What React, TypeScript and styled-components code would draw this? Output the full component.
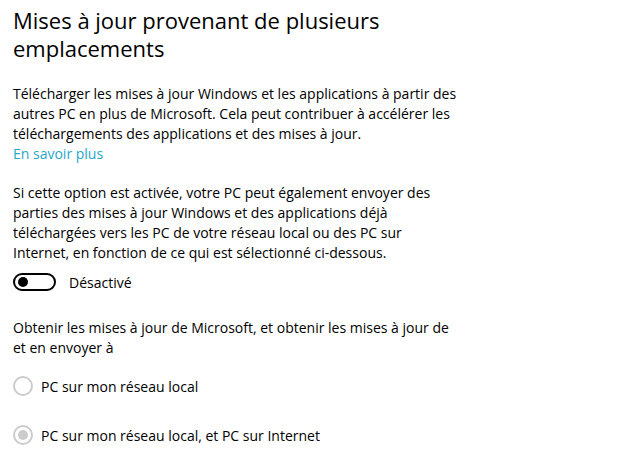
import React from "react";
import styled, { createGlobalStyle } from "styled-components";

const Global = createGlobalStyle`
  html, body { margin: 0; padding: 0; background: #ffffff; }
  body { font-family: "Open Sans", "Noto Sans", "Liberation Sans", sans-serif; color: #000; }
`;

const Page = styled.main`
  display: flex;
  flex-direction: column;
  align-items: flex-start;
  padding: 6px 0 0 13px;
  width: 627px;
  height: 457px;
  box-sizing: border-box;
  overflow: hidden;
`;

const Title = styled.h1`
  margin: 0;
  font-size: 22px;
  font-weight: 400;
  line-height: 28px;
  color: #000;
`;

const Paragraph = styled.p<{ $top: number }>`
  margin: ${(p) => p.$top}px 0 0;
  font-size: 14px;
  line-height: 20px;
  color: #000;
`;

const Link = styled.a`
  color: #27a8c8;
  text-decoration: none;
`;

const ToggleRow = styled.label`
  display: flex;
  align-items: center;
  gap: 13px;
  margin-top: 9px;
  height: 20px;
  font-size: 14px;
`;

const Track = styled.span`
  display: flex;
  align-items: center;
  box-sizing: border-box;
  width: 43px;
  height: 18px;
  border: 2px solid #000;
  border-radius: 9px;
  padding-left: 3px;
`;

const Knob = styled.span`
  width: 10px;
  height: 10px;
  border-radius: 50%;
  background: #000;
`;

const RadioRow = styled.label<{ $top: number }>`
  display: flex;
  align-items: center;
  gap: 8px;
  margin-top: ${(p) => p.$top}px;
  height: 20px;
  font-size: 14px;
  color: #000;
`;

const RadioCircle = styled.span<{ $checked?: boolean }>`
  display: flex;
  align-items: center;
  justify-content: center;
  box-sizing: border-box;
  width: 20px;
  height: 20px;
  border: 2px solid #cccccc;
  border-radius: 50%;
  &::after {
    content: "";
    display: ${(p) => (p.$checked ? "block" : "none")};
    width: 10px;
    height: 10px;
    border-radius: 50%;
    background: #cccccc;
  }
`;

export default function App() {
  return (
    <>
      <Global />
      <Page>
        <Title>
          Mises à jour provenant de plusieurs
          <br />
          emplacements
        </Title>
        <Paragraph $top={22}>
          Télécharger les mises à jour Windows et les applications à partir des
          <br />
          autres PC en plus de Microsoft. Cela peut contribuer à accélérer les
          <br />
          téléchargements des applications et des mises à jour.
          <br />
          <Link href="#">En savoir plus</Link>
        </Paragraph>
        <Paragraph $top={19}>
          Si cette option est activée, votre PC peut également envoyer des
          <br />
          parties des mises à jour Windows et des applications déjà
          <br />
          téléchargées vers les PC de votre réseau local ou des PC sur
          <br />
          Internet, en fonction de ce qui est sélectionné ci-dessous.
        </Paragraph>
        <ToggleRow>
          <Track>
            <Knob />
          </Track>
          Désactivé
        </ToggleRow>
        <Paragraph $top={26}>
          Obtenir les mises à jour de Microsoft, et obtenir les mises à jour de
          <br />
          et en envoyer à
        </Paragraph>
        <RadioRow $top={18}>
          <RadioCircle />
          PC sur mon réseau local
        </RadioRow>
        <RadioRow $top={29}>
          <RadioCircle $checked />
          PC sur mon réseau local, et PC sur Internet
        </RadioRow>
      </Page>
    </>
  );
}
